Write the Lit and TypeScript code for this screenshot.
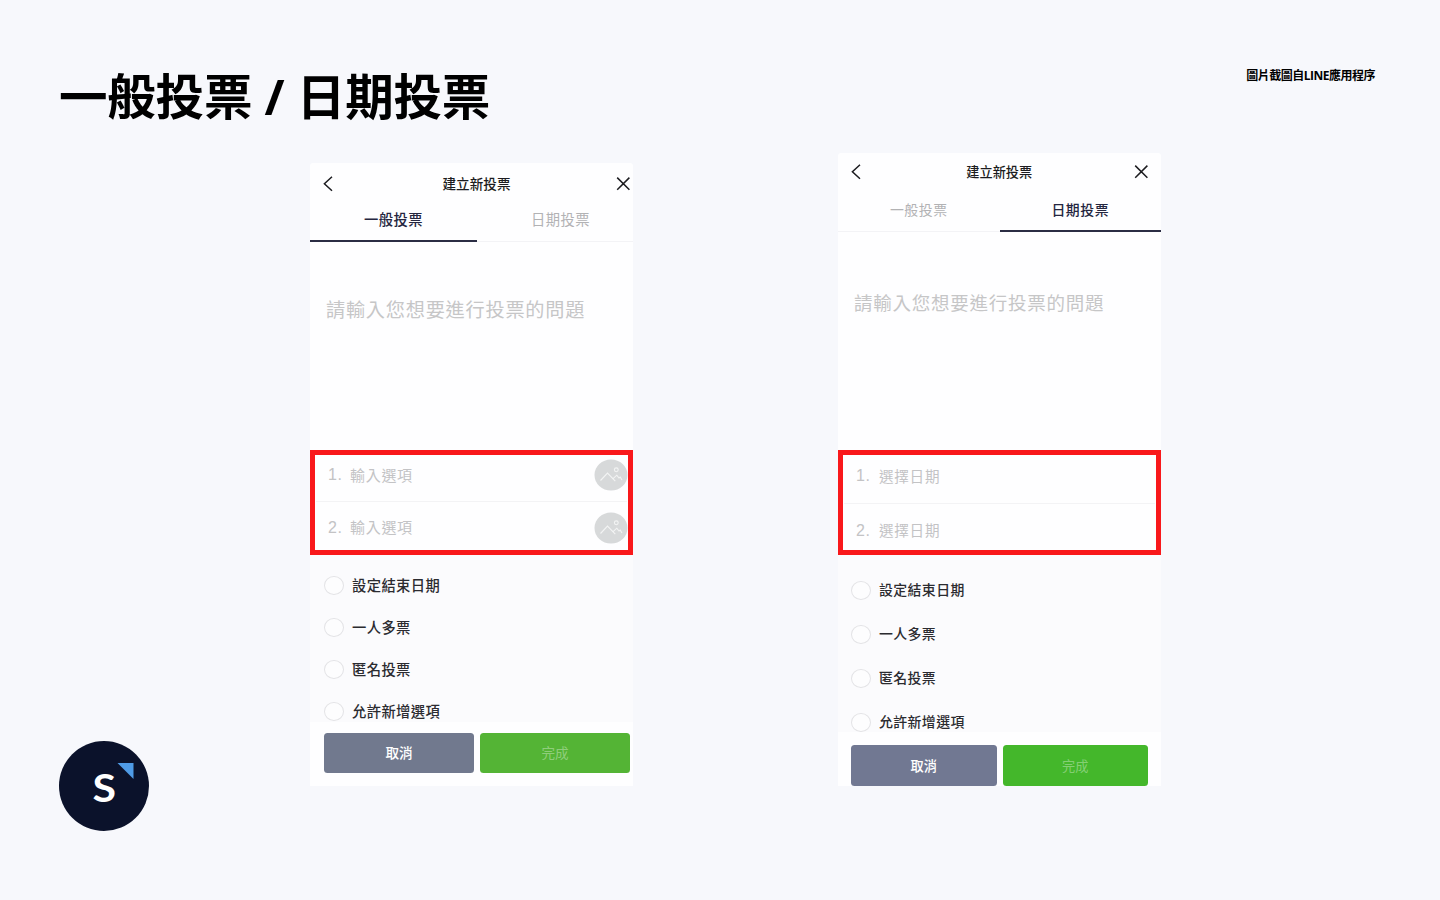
import { LitElement, html, css, svg } from "lit";
import { customElement, property } from "lit/decorators.js";
import { classMap } from "lit/directives/class-map.js";
import { when } from "lit/directives/when.js";

const TABS = ["一般投票", "日期投票"];
const SETTINGS = ["設定結束日期", "一人多票", "匿名投票", "允許新增選項"];

const backIcon = svg`
  <svg class="icon" width="20" height="20" viewBox="0 0 20 20" fill="none" stroke="currentColor" stroke-width="1.5">
    <path d="M14 2.8 L6.4 9.8 L14 16.8" />
  </svg>
`;

const closeIcon = svg`
  <svg class="icon" width="20" height="20" viewBox="0 0 20 20" fill="none" stroke="currentColor" stroke-width="1.5">
    <path d="M4.2 3.6 L16.4 15.8 M16.4 3.6 L4.2 15.8" />
  </svg>
`;

const photoIcon = svg`
  <svg class="photo" width="34" height="32" viewBox="0 0 34 32" fill="none">
    <ellipse cx="17" cy="16" rx="16.5" ry="15.6" fill="#d7d9da" />
    <g stroke="#f3f4f4" stroke-width="1.1">
      <path d="M6.5 21.5 L13.5 14 L21.3 22.2" />
      <path d="M18.8 19.8 L22.8 16.2 L25 19 L26.2 18 L28 21" />
      <circle cx="22.3" cy="10.8" r="1.9" />
    </g>
  </svg>
`;

@customElement("vote-panel")
class VotePanel extends LitElement {
  static styles = css`
    * {
      box-sizing: border-box;
    }

    :host {
      display: block;
      width: 323px;
      overflow: hidden;
      border-radius: 3px 3px 0 0;
      background: #fefeff;
      color: #2b2b30;
    }

    .screen {
      display: flex;
      flex-direction: column;
      width: var(--screen-width);
    }

    .icon,
    .photo {
      display: block;
      flex: none;
    }

    .nav {
      display: flex;
      align-items: center;
      justify-content: space-between;
      height: var(--nav-height);
      padding: 0 var(--nav-right) 0 var(--nav-left);
      color: #1c1c20;
    }

    .nav-title {
      flex: 1;
      text-align: center;
      font-size: var(--nav-size);
      font-weight: 500;
      padding: 0 0 var(--nav-lift) 2px;
    }

    .tabs {
      display: flex;
      height: var(--tabs-height);
    }

    .tab {
      flex: 1;
      display: flex;
      justify-content: center;
      padding-top: var(--tab-top);
      border-bottom: 1px solid #f3f3f6;
      font-size: var(--text-size);
      line-height: 20px;
      letter-spacing: 0.5px;
      color: #b2b2b4;
    }

    .tab.active {
      border-bottom: 2px solid #2b2d44;
      color: #25263f;
      font-weight: 500;
    }

    .question {
      height: var(--question-height);
      padding: var(--question-top) 0 0 16px;
      font-size: var(--question-size);
      line-height: 28px;
      letter-spacing: 0.75px;
      white-space: nowrap;
      color: #c6c6c7;
    }

    .choices {
      width: 323px;
      height: 105px;
      overflow: hidden;
      border: 5px solid #f9181b;
    }

    .choice {
      display: flex;
      align-items: center;
      height: var(--choice-height);
      margin: 0 1px;
      font-size: var(--choice-size);
      letter-spacing: 0.7px;
      color: #c3c3c5;
    }

    /* the list is scrolled a little under the frame */
    .choice:first-child {
      margin-top: -6px;
    }

    .choice + .choice {
      border-top: 1px solid #f3f3f5;
    }

    .number {
      width: var(--number-width);
      padding-left: 12px;
      font-family: "Liberation Sans", Arial, sans-serif;
      font-size: 16px;
      letter-spacing: 0.6px;
    }

    .choice-text {
      padding-bottom: 2px;
    }

    .photo {
      margin: 0 -1px 0 auto;
    }

    .settings {
      height: var(--settings-height);
      padding-top: var(--settings-top);
      overflow: hidden;
      background: #fbfbfd;
    }

    .setting {
      display: flex;
      align-items: center;
      gap: 8px;
      height: var(--setting-height);
      padding-left: var(--setting-left);
      font-size: var(--text-size);
      font-weight: 500;
      letter-spacing: 0.4px;
    }

    .setting-label {
      padding-bottom: 2px;
    }

    .radio {
      width: 20px;
      height: 19px;
      border: 1px solid #e3e3e6;
      border-radius: 50%;
      background: #fdfdfe;
    }

    .actions {
      display: flex;
      gap: 6px;
      height: var(--actions-height);
      padding: var(--actions-top) 0 0 var(--actions-left);
    }

    .button {
      display: flex;
      align-items: center;
      justify-content: center;
      width: var(--button-width);
      height: var(--button-height);
      padding-bottom: var(--button-lift);
      border-radius: 3.5px;
      font-size: var(--nav-size);
      font-weight: 500;
      color: #fff;
      background: var(--cancel-color);
    }

    .button.done {
      font-weight: 400;
      color: rgba(255, 255, 255, 0.36);
      background: var(--done-color);
    }
  `;

  @property({ type: Number }) active = 0;
  @property() choice = "";
  @property({ type: Boolean }) photos = false;

  render() {
    return html`
      <div class="screen">
        <div class="nav">
          ${backIcon}
          <div class="nav-title">建立新投票</div>
          ${closeIcon}
        </div>
        <div class="tabs">
          ${TABS.map(
            (tab, i) => html`
              <div class=${classMap({ tab: true, active: i === this.active })}>${tab}</div>
            `
          )}
        </div>
        <div class="question">請輸入您想要進行投票的問題</div>
        <div class="choices">
          ${[1, 2].map(
            (n) => html`
              <div class="choice">
                <span class="number">${n}.</span>
                <span class="choice-text">${this.choice}</span>
                ${when(this.photos, () => photoIcon)}
              </div>
            `
          )}
        </div>
        <div class="settings">
          ${SETTINGS.map(
            (label) => html`
              <div class="setting">
                <span class="radio"></span>
                <span class="setting-label">${label}</span>
              </div>
            `
          )}
        </div>
        <div class="actions">
          <div class="button">取消</div>
          <div class="button done">完成</div>
        </div>
      </div>
    `;
  }
}

@customElement("app-root")
class AppRoot extends LitElement {
  static styles = css`
    * {
      box-sizing: border-box;
    }

    :host {
      display: flex;
      flex-direction: column;
      width: 1440px;
      height: 900px;
      overflow: hidden;
      background: #f7f8fc;
      color: #000;
      font-family: "Noto Sans CJK TC", sans-serif;
    }

    .header {
      display: flex;
      justify-content: space-between;
      align-items: flex-start;
      height: 153px;
      padding: 60px 65px 0 59px;
      font-family: "Open Sans", "Noto Sans CJK TC", sans-serif;
    }

    .title {
      margin: 0;
      font-size: 48.5px;
      line-height: 72px;
      font-weight: 700;
      letter-spacing: -0.2px;
    }

    .source {
      padding-top: 7px;
      font-size: 12px;
      line-height: 18px;
      font-weight: 700;
      letter-spacing: -0.5px;
    }

    .stage {
      display: flex;
      align-items: flex-end;
      height: 678px;
      padding-left: 59px;
    }

    .logo {
      display: block;
      margin-right: 161px;
    }

    .logo-letter {
      font-family: Lato, sans-serif;
      font-size: 39px;
      font-weight: 700;
    }

    .panel {
      margin-bottom: 45px;
    }

    .general {
      height: 623px;
      margin-right: 205px;
      --screen-width: 334px;
      --nav-height: 41px;
      --nav-left: 8px;
      --nav-right: 11px;
      --nav-lift: 2px;
      --nav-size: 13.6px;
      --tabs-height: 38px;
      --tab-top: 5px;
      --text-size: 14.3px;
      --question-height: 208px;
      --question-top: 53px;
      --question-size: 19.2px;
      --choice-height: 52px;
      --choice-size: 15px;
      --number-width: 34px;
      --settings-height: 167px;
      --settings-top: 9px;
      --setting-height: 42px;
      --setting-left: 14px;
      --actions-height: 64px;
      --actions-top: 11px;
      --actions-left: 14px;
      --button-width: 150px;
      --button-height: 40px;
      --button-lift: 2px;
      --cancel-color: #71798e;
      --done-color: #54b435;
    }

    .date {
      height: 633px;
      --screen-width: 323px;
      --nav-height: 37px;
      --nav-left: 7.5px;
      --nav-right: 10px;
      --nav-lift: 0;
      --nav-size: 13.2px;
      --tabs-height: 42px;
      --tab-top: 9px;
      --text-size: 13.9px;
      --question-height: 218px;
      --question-top: 56px;
      --question-size: 18.5px;
      --choice-height: 54px;
      --choice-size: 14.6px;
      --number-width: 35px;
      --settings-height: 177px;
      --settings-top: 13px;
      --setting-height: 44px;
      --setting-left: 13px;
      --actions-height: 54px;
      --actions-top: 13px;
      --actions-left: 13px;
      --button-width: 145.5px;
      --button-height: 41px;
      --button-lift: 0;
      --cancel-color: #717892;
      --done-color: #44b72b;
    }
  `;

  render() {
    return html`
      <div class="header">
        <h1 class="title">一般投票 / 日期投票</h1>
        <div class="source">圖片截圖自LINE應用程序</div>
      </div>
      <div class="stage">
        <svg class="logo" width="90" height="90" viewBox="0 0 90 90">
          <circle cx="45" cy="45" r="45" fill="#0b122b" />
          <path d="M58.5 22 H74.5 V38 Z" fill="#4f9be6" />
          <text class="logo-letter" transform="translate(45.3 61) scale(1.1 1)" text-anchor="middle" fill="#fff">S</text>
        </svg>
        <vote-panel class="panel general" active="0" choice="輸入選項" photos></vote-panel>
        <vote-panel class="panel date" active="1" choice="選擇日期"></vote-panel>
      </div>
    `;
  }
}
